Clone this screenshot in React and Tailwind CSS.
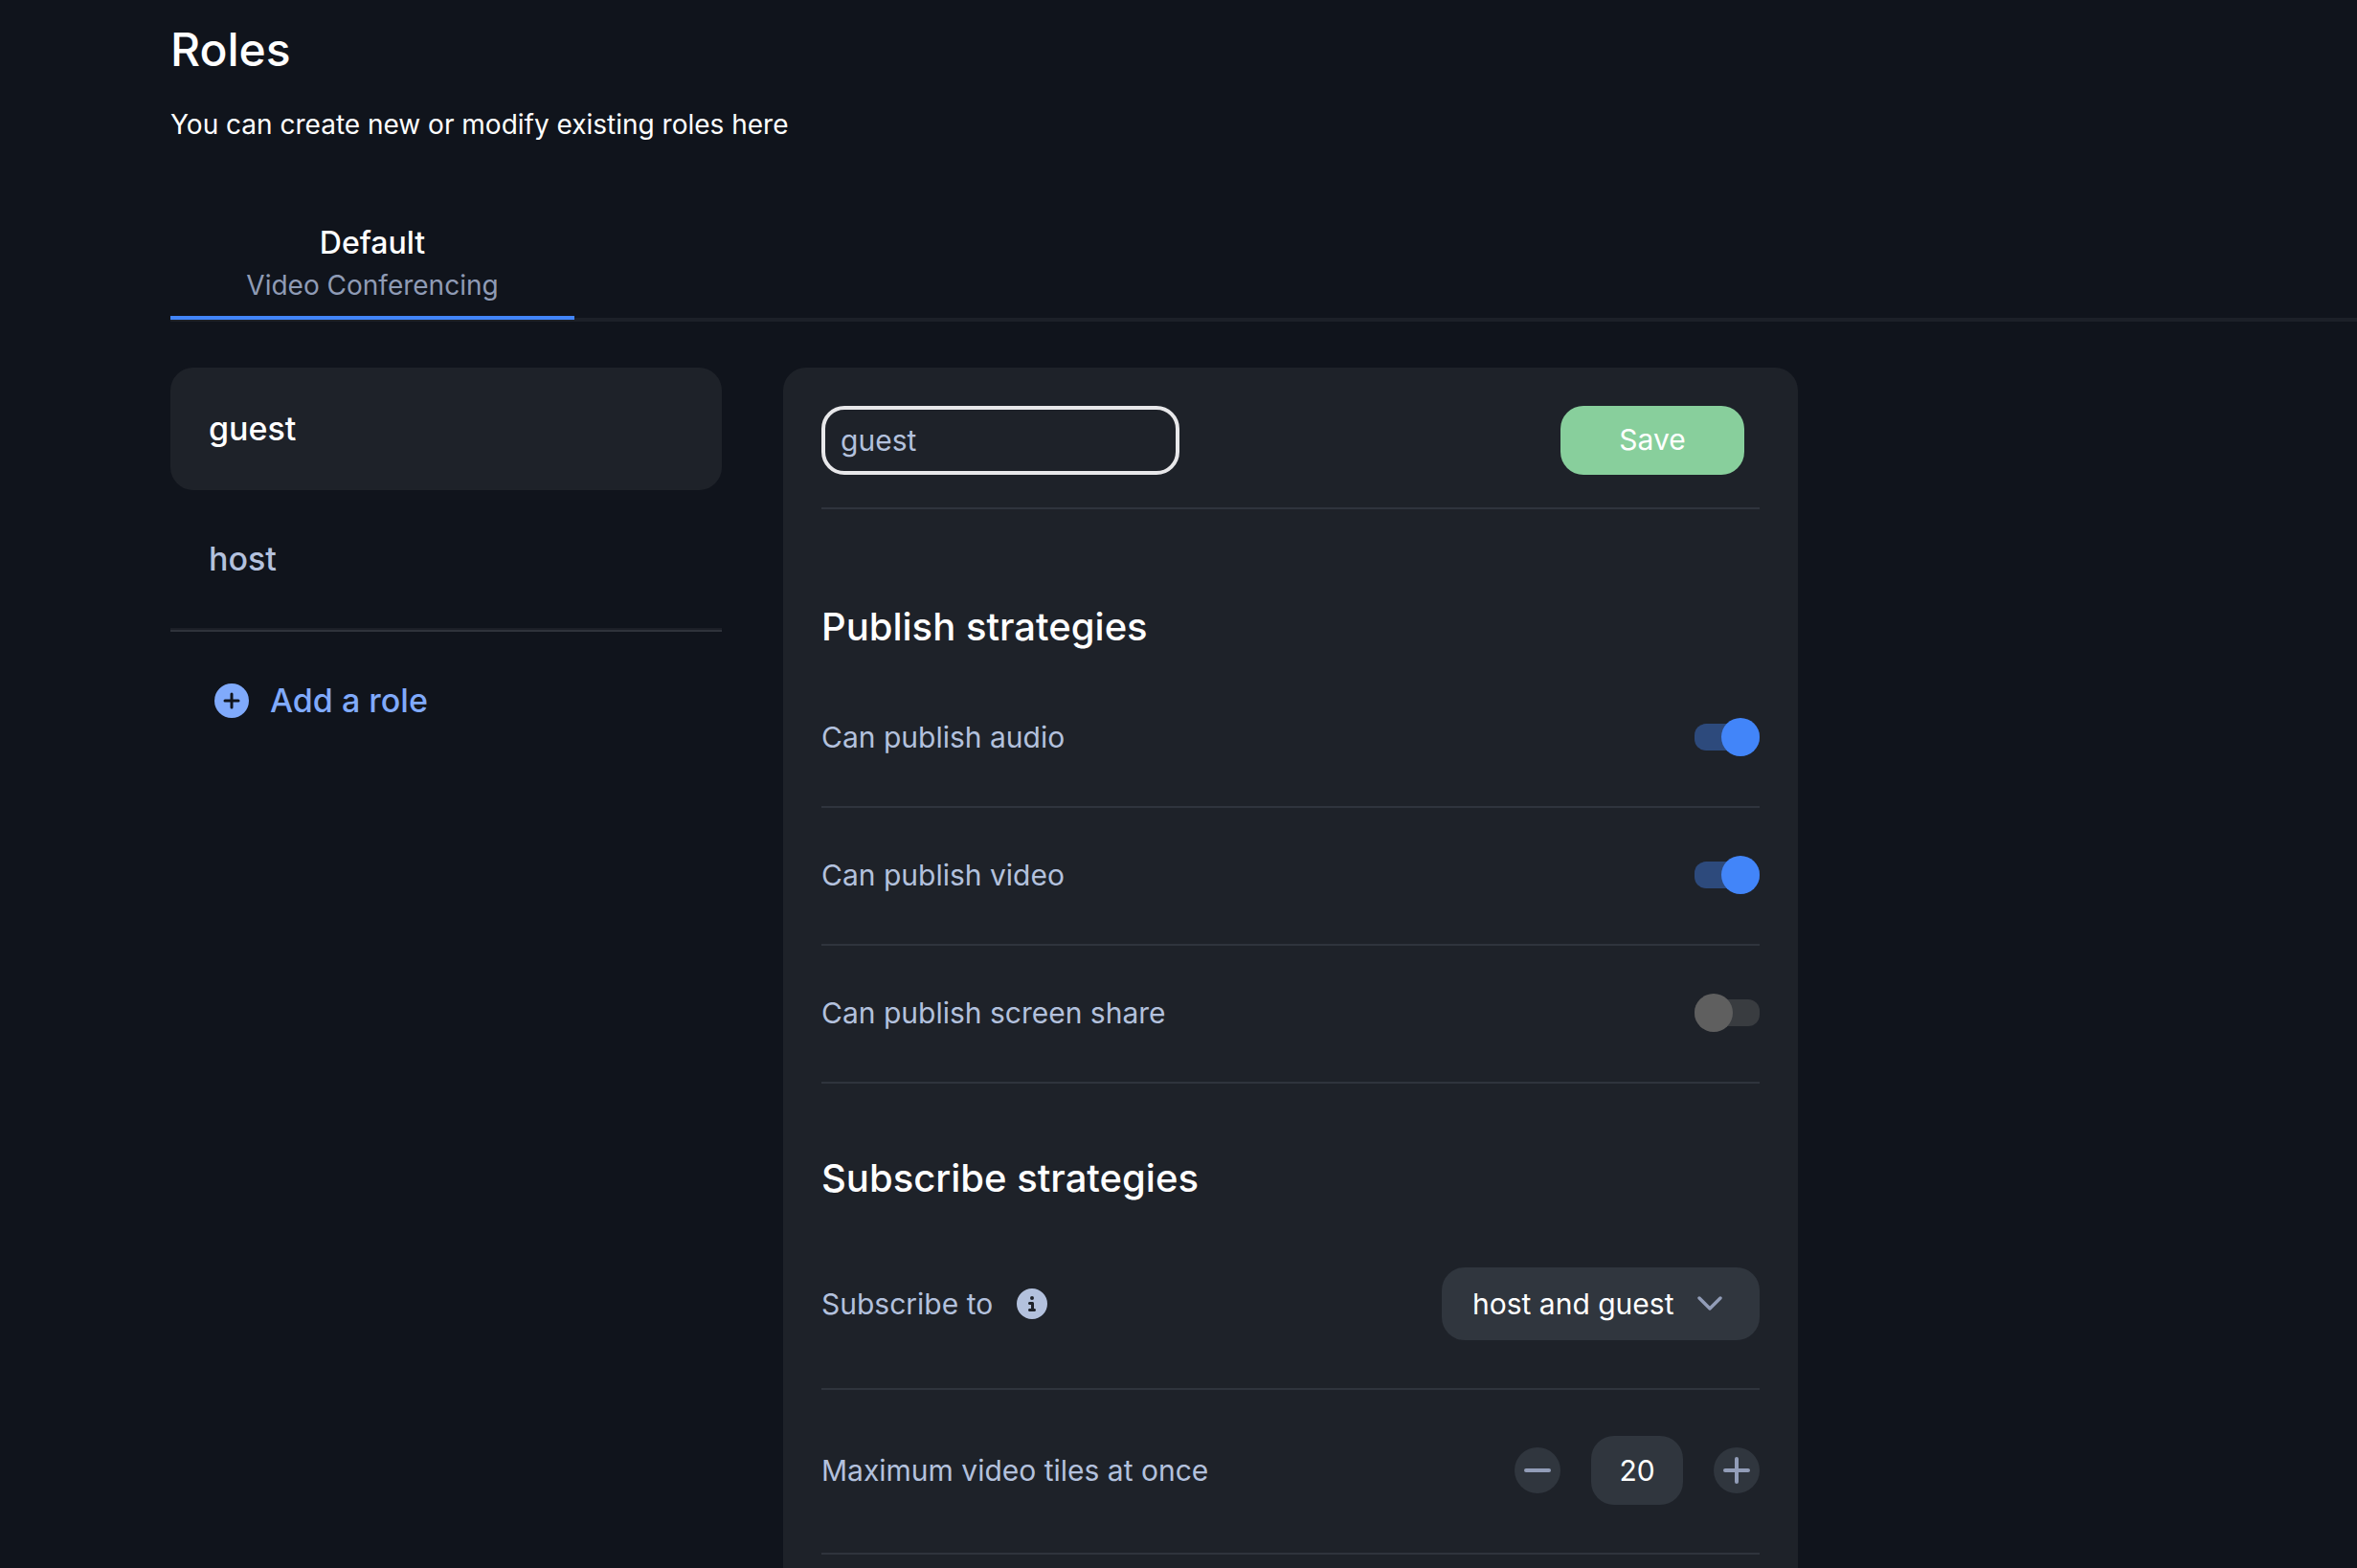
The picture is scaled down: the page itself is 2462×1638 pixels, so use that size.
import { useState } from "react";
import { FaCircleInfo } from "react-icons/fa6";

function Toggle({ id, defaultChecked }) {
  return (
    <input
      id={id}
      type="checkbox"
      role="switch"
      defaultChecked={defaultChecked}
      className="relative h-7 w-[68px] shrink-0 cursor-pointer appearance-none rounded-xl bg-[#393c40] before:absolute before:-top-1.5 before:left-0 before:size-10 before:rounded-full before:bg-[#5f5f5f] checked:bg-[#2d4a7c] checked:before:left-7 checked:before:bg-[#4285f9]"
    />
  );
}

function ToggleRow({ id, label, defaultChecked }) {
  return (
    <div className="flex h-36 items-center justify-between border-b-2 border-[#2f343d] pb-0.5">
      <label htmlFor={id} className="text-[30px] leading-10 text-[#b3c1dd]">
        {label}
      </label>
      <Toggle id={id} defaultChecked={defaultChecked} />
    </div>
  );
}

function StepButton({ label, path, onClick }) {
  return (
    <button
      type="button"
      aria-label={label}
      onClick={onClick}
      className="flex size-12 items-center justify-center rounded-full bg-[#30363e] text-[#929db8]"
    >
      <svg viewBox="0 0 48 48" className="size-12" fill="none" stroke="currentColor" strokeWidth="4" strokeLinecap="round">
        <path d={path} />
      </svg>
    </button>
  );
}

export default function App() {
  const [tiles, setTiles] = useState(20);
  return (
    <div className="h-screen overflow-hidden bg-[#10141c] pl-[178px] font-['Inter',sans-serif] text-white">
      <header className="pt-6">
        <h1 className="text-[48px] leading-14 font-medium">Roles</h1>
        <p className="mt-8 text-[28px] leading-9">You can create new or modify existing roles here</p>
      </header>

      <nav className="mt-21 flex border-b-4 border-[#1c2028]">
        <button type="button" className="-mb-0.5 flex w-[422px] flex-col items-center border-b-4 border-[#4285f9] pb-2.5">
          <span className="text-[32px] leading-11 font-medium">Default</span>
          <span className="text-[28px] leading-11 text-[#8f9bb5]">Video Conferencing</span>
        </button>
      </nav>

      <main className="mt-12 flex items-start gap-16">
        <aside className="w-[576px] shrink-0">
          <button type="button" className="flex h-32 w-full items-center rounded-3xl bg-[#1e2229] px-10 pb-0.5 text-[34px] font-medium">
            guest
          </button>
          <button type="button" className="mt-2 flex h-32 w-full items-center px-10 pb-0.5 text-[34px] font-medium text-[#b3c1dd]">
            host
          </button>
          <hr className="mt-2 h-1 border-t-2 border-b-2 border-t-[#1c1f27] border-b-[#2f333b]" />
          <button type="button" className="mt-12 flex items-center gap-[22px] px-[46px] text-[34px] leading-12 font-medium text-[#80aafb]">
            <svg viewBox="0 0 36 36" className="size-9" aria-hidden="true">
              <circle cx="18" cy="18" r="18" fill="currentColor" />
              <path d="M11 18H25M18 11V25" stroke="#10141c" strokeWidth="3" strokeLinecap="round" />
            </svg>
            Add a role
          </button>
        </aside>

        <section className="min-h-screen w-full max-w-[1060px] rounded-3xl bg-[#1e2229] px-10 pt-10">
          <div className="flex items-start justify-between border-b-2 border-[#2f343d] pr-4 pb-[34px]">
            <input
              aria-label="Role name"
              defaultValue="guest"
              className="h-[72px] w-[374px] rounded-3xl border-4 border-[#e8e8ea] bg-transparent px-4 text-[30px] text-[#b3c1dd] outline-none"
            />
            <button type="button" className="h-[72px] w-48 rounded-3xl bg-[#88cf9c] pb-0.5 text-[30px]">
              Save
            </button>
          </div>

          <h2 className="mt-24 mb-[18px] text-[40px] leading-[54px] font-medium">Publish strategies</h2>
          <ToggleRow id="audio" label="Can publish audio" defaultChecked />
          <ToggleRow id="video" label="Can publish video" defaultChecked />
          <ToggleRow id="screen" label="Can publish screen share" />

          <h2 className="mt-18 mb-[18px] text-[40px] leading-[54px] font-medium">Subscribe strategies</h2>
          <div className="flex h-44 items-center border-b-2 border-[#2f343d] pb-0.5">
            <label htmlFor="subscribe" className="text-[30px] leading-10 text-[#b3c1dd]">
              Subscribe to
            </label>
            <button type="button" aria-label="About subscriptions" className="ml-[25px] text-[#b3c1dd]">
              <FaCircleInfo className="size-8" />
            </button>
            <div className="relative ml-auto">
              <select
                id="subscribe"
                defaultValue="host and guest"
                className="h-19 w-[332px] appearance-none rounded-3xl bg-[#30363e] pl-8 text-[30px] text-white outline-none"
              >
                <option>host and guest</option>
                <option>host</option>
                <option>guest</option>
              </select>
              <svg viewBox="0 0 28 16" className="pointer-events-none absolute top-7.5 right-9.5 h-4 w-7" fill="none" stroke="#929db8" strokeWidth="3.4" strokeLinecap="round" strokeLinejoin="round">
                <path d="M3 2 14 13 25 2" />
              </svg>
            </div>
          </div>
          <div className="flex h-[172px] items-center justify-between border-b-2 border-[#2f343d] pb-0.5">
            <label htmlFor="tiles" className="text-[30px] leading-10 text-[#b3c1dd]">
              Maximum video tiles at once
            </label>
            <div className="flex items-center gap-8">
              <StepButton label="Fewer tiles" path="M12 24H36" onClick={() => setTiles(tiles - 1)} />
              <input
                id="tiles"
                value={tiles}
                onChange={(e) => setTiles(Number(e.target.value) || 0)}
                className="h-[72px] w-24 rounded-3xl bg-[#30363e] text-center text-[30px] outline-none"
              />
              <StepButton label="More tiles" path="M12 24H36M24 12V36" onClick={() => setTiles(tiles + 1)} />
            </div>
          </div>
        </section>
      </main>
    </div>
  );
}
